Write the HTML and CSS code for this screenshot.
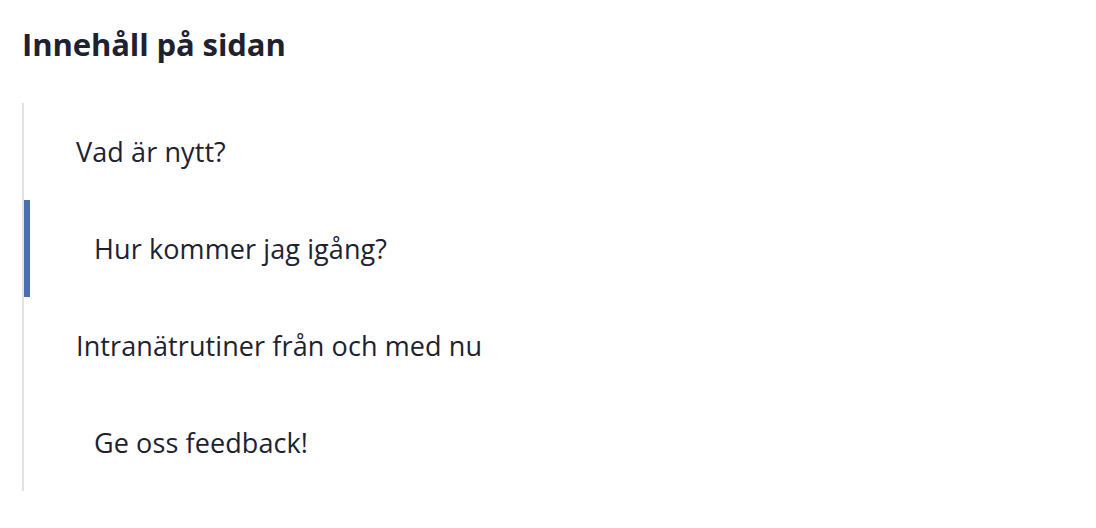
FILE: index.html
```html
<!DOCTYPE html>
<html lang="sv">
<head>
<meta charset="utf-8">
<title>Innehåll på sidan</title>
<link rel="stylesheet" href="styles.css">
</head>
<body>
<nav class="toc">
  <h2 class="toc-title">Innehåll på sidan</h2>
  <ul class="toc-list">
    <li class="toc-item"><a href="#">Vad är nytt?</a></li>
    <li class="toc-item sub active"><a href="#">Hur kommer jag igång?</a></li>
    <li class="toc-item"><a href="#">Intranätrutiner från och med nu</a></li>
    <li class="toc-item sub"><a href="#">Ge oss feedback!</a></li>
  </ul>
</nav>
</body>
</html>
```
FILE: styles.css
```css
html, body {
  margin: 0;
  padding: 0;
  background: #ffffff;
}
body {
  font-family: "Open Sans", "Liberation Sans", sans-serif;
  color: #1e2230;
}
.toc {
  padding: 22px 0 0 22px;
}
.toc-title {
  margin: 0;
  font-size: 31px;
  line-height: 44px;
  font-weight: 700;
  letter-spacing: -0.1px;
}
.toc-list {
  list-style: none;
  margin: 37px 0 0 0;
  padding: 0;
  border-left: 2px solid #e3e3e3;
  width: 700px;
}
.toc-item {
  height: 97px;
  display: flex;
  align-items: center;
  padding-left: 52px;
}
.toc-item.sub {
  padding-left: 70px;
}
.toc-item.active {
  padding-left: 64px;
  border-left: 6px solid #4a71a8;
}
.toc-item a {
  color: inherit;
  text-decoration: none;
  font-size: 27px;
  letter-spacing: 0.1px;
}
```
